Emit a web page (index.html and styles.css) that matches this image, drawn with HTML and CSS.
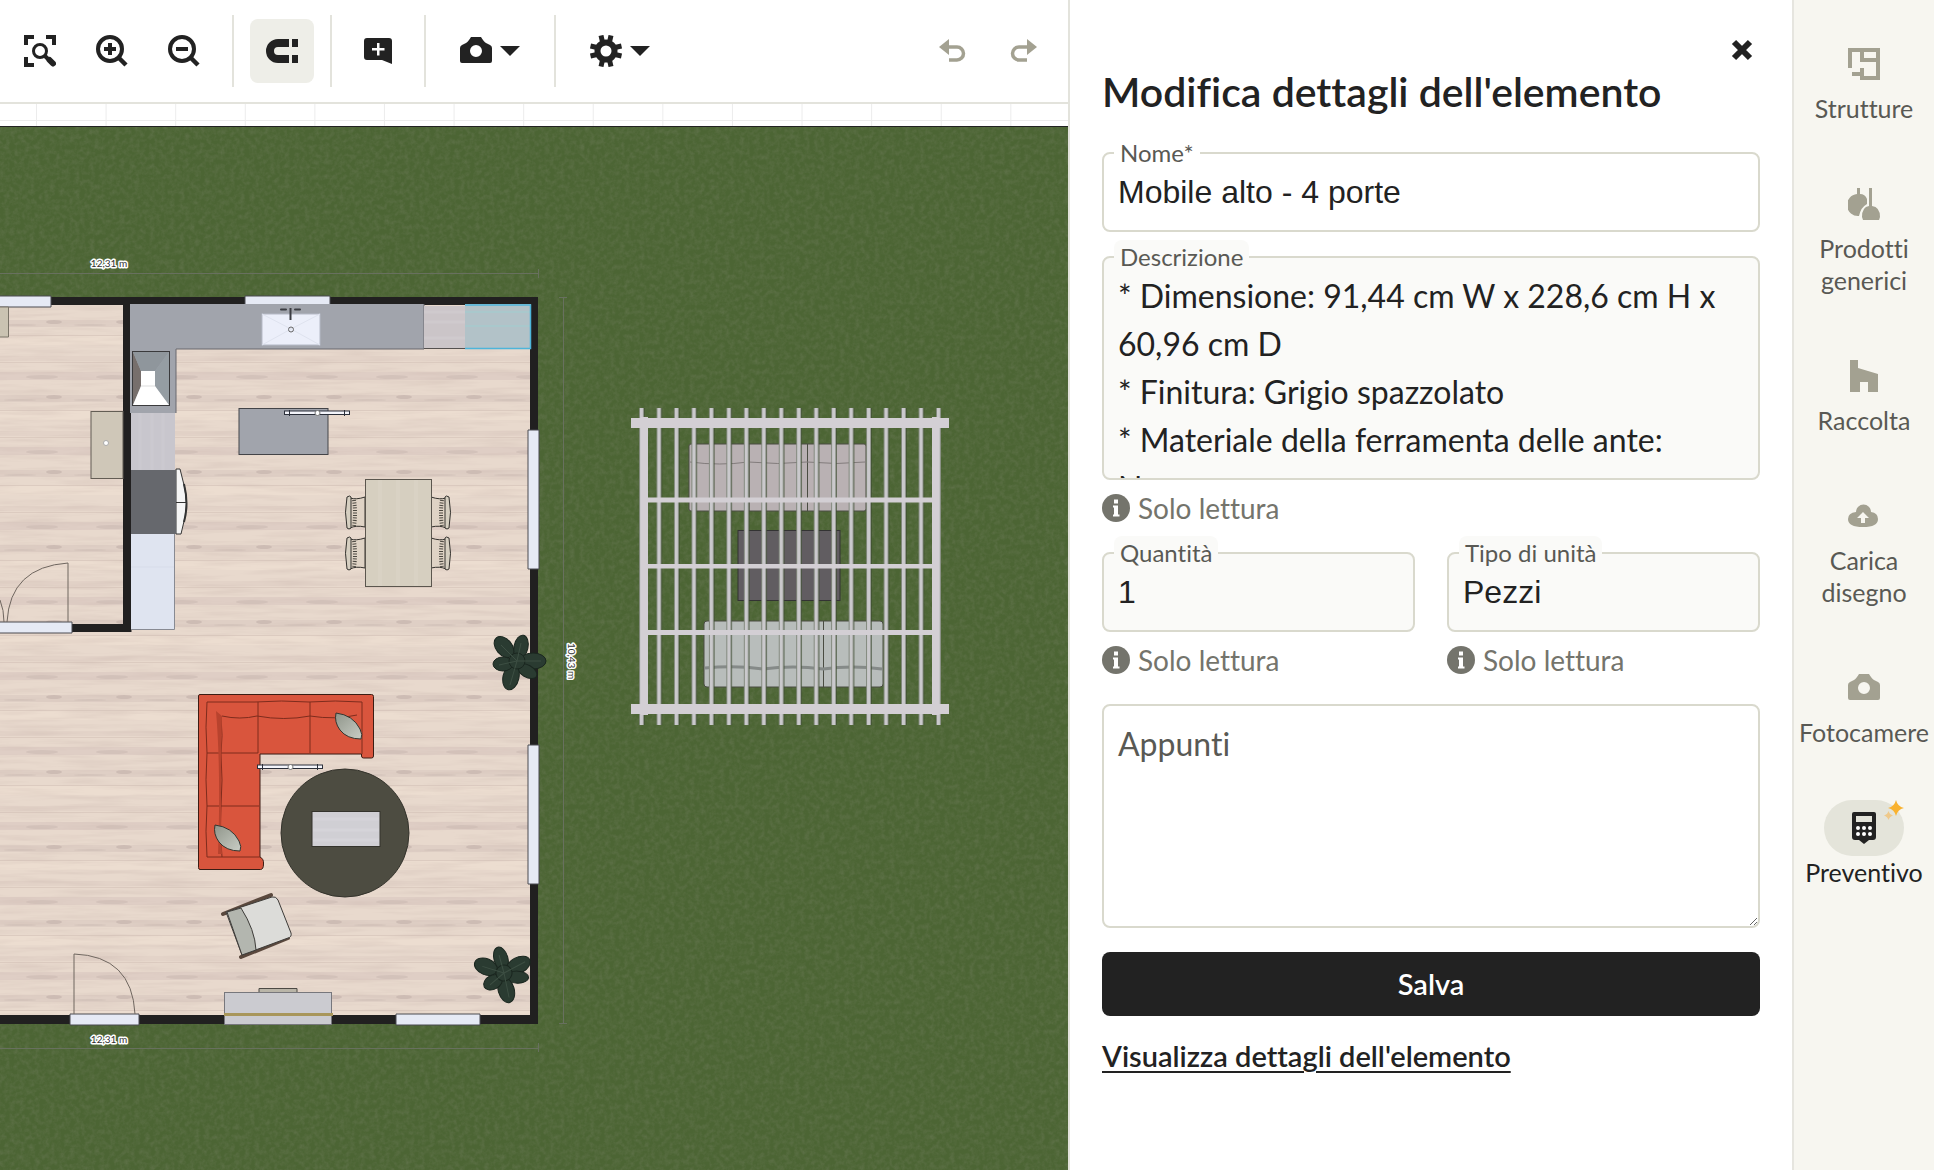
FILE: index.html
```html
<!DOCTYPE html>
<html lang="it">
<head>
  <meta charset="UTF-8" />
  <meta name="viewport" content="width=device-width, initial-scale=1.0" />
  <title>Modifica dettagli dell'elemento</title>
  <link rel="stylesheet" href="styles.css">
</head>
<body>
  <main class="workspace">
    <div class="toolbar">
      <button class="tool" aria-label="Adatta allo schermo">
        <svg class="icon" viewBox="0 0 32 32"><path d="M0 0h10v4H4v6H0zM22 0h10v10h-4V4h-6zM0 22h4v6h6v4H0z"/><circle cx="16" cy="16" r="6.5" fill="none" stroke="currentColor" stroke-width="3"/><path d="M21 21l3 3" stroke="currentColor" stroke-width="4"/><path d="M25.500 25l3.500 3.500" stroke="currentColor" stroke-width="6" stroke-linecap="round"/></svg>
      </button>
      <button class="tool" aria-label="Ingrandisci">
        <svg class="icon" viewBox="0 0 32 32"><circle cx="14" cy="14" r="12" fill="none" stroke="currentColor" stroke-width="4"/><path d="M22.500 22.500l7.500 7.500" stroke="currentColor" stroke-width="4.500"/><path d="M12 8h4v4h4v4h-4v4h-4v-4H8v-4h4z"/></svg>
      </button>
      <button class="tool" aria-label="Riduci">
        <svg class="icon" viewBox="0 0 32 32"><circle cx="14" cy="14" r="12" fill="none" stroke="currentColor" stroke-width="4"/><path d="M22.500 22.500l7.500 7.500" stroke="currentColor" stroke-width="4.500"/><path d="M8 12h12v4H8z"/></svg>
      </button>
      <span class="divider"></span>
      <button class="tool active" aria-label="Calamita" aria-pressed="true">
        <svg class="icon" viewBox="0 0 32 32"><path d="M23 4H12a12 12 0 0 0 0 24h11v-8H12a4 4 0 0 1 0-8h11zM26 4h6v8h-6zM26 20h6v8h-6z"/></svg>
      </button>
      <span class="divider"></span>
      <button class="tool note" aria-label="Aggiungi nota">
        <svg class="icon" viewBox="0 0 32 32"><path fill-rule="evenodd" d="M5 3h22a3 3 0 0 1 3 3v23l-10-4H5a3 3 0 0 1-3-3V6a3 3 0 0 1 3-3zM15 8v5h-5v2.500h5v5h2.500v-5h5V13h-5V8z"/></svg>
      </button>
      <span class="divider"></span>
      <button class="tool menu" aria-label="Fotocamera">
        <svg class="icon" viewBox="0 0 32 32"><path fill-rule="evenodd" d="M11 2h10q3 5 5 6l4 2q2 1 2 3v13q0 2-2 2H2q-2 0-2-2V13q0-2 2-3l4-2q2-1 5-6zM16 10a6 6 0 1 0 0 12 6 6 0 0 0 0-12z"/></svg>
        <svg class="caret" viewBox="0 0 20 10"><path d="M0 0h20L10 10z"/></svg>
      </button>
      <span class="divider"></span>
      <button class="tool menu" aria-label="Impostazioni">
        <svg class="icon" viewBox="0 0 32 32"><circle cx="16" cy="16" r="8.500" fill="none" stroke="currentColor" stroke-width="6"/><g stroke="currentColor" stroke-width="5"><path d="M19.500 7l1.500-6.500M12.500 7L11 0.500M19.500 25l1.500 6.500M12.500 25L11 31.500M7 12.500L0.500 11M7 19.500L0.500 21M25 12.500l6.500-1.500M25 19.500l6.500 1.500"/></g></svg>
        <svg class="caret" viewBox="0 0 20 10"><path d="M0 0h20L10 10z"/></svg>
      </button>
      <div class="history">
        <button class="tool" aria-label="Annulla" disabled>
          <svg class="icon" viewBox="0 0 32 32"><path d="M3 12L13 4v16z"/><path d="M12 12h9a6.500 6.500 0 0 1 0 13h-8" fill="none" stroke="currentColor" stroke-width="3.500"/></svg>
        </button>
        <button class="tool" aria-label="Ripeti" disabled>
          <svg class="icon" viewBox="0 0 32 32"><path d="M29 12L19 4v16z"/><path d="M20 12h-9a6.500 6.500 0 0 0 0 13h8" fill="none" stroke="currentColor" stroke-width="3.500"/></svg>
        </button>
      </div>
    </div>
    <div class="ruler"></div>
    <div class="canvas">
      <svg class="plan" viewBox="0 127 1068 1043" preserveAspectRatio="xMinYMin slice">
        <defs>
          <filter id="grass" x="0" y="0" width="100%" height="100%">
            <feTurbulence type="fractalNoise" baseFrequency="0.2" numOctaves="3" seed="4"/>
            <feColorMatrix values="0 0 0 0 0.13  0 0 0 0 0.18  0 0 0 0 0.08  1.2 0 0 0 -0.45"/>
          </filter>
          <filter id="grain" x="0" y="0" width="100%" height="100%">
            <feTurbulence type="fractalNoise" baseFrequency="0.015 0.2" numOctaves="3" seed="9"/>
            <feColorMatrix values="0 0 0 0 0.62  0 0 0 0 0.5  0 0 0 0 0.45  0.8 0 0 0 -0.32"/>
          </filter>
          <pattern id="planks" width="70" height="75" patternUnits="userSpaceOnUse" y="10">
            <rect width="70" height="75" fill="#e8d9cd"/>
            <rect y="10" width="70" height="7" fill="#dfcfc5"/>
            <rect y="26" width="70" height="9" fill="#ecddd0"/>
            <rect y="46" width="70" height="5" fill="#e3d3c8"/>
            <rect y="62" width="70" height="8" fill="#dfcec5"/>
            <ellipse cx="54" cy="12" rx="8" ry="2" fill="#cdbcb4"/>
            <ellipse cx="20" cy="15" rx="16" ry="1" fill="#d5c5bc"/>
            <ellipse cx="42" cy="67" rx="16" ry="2" fill="#d3c2ba"/>
            <path d="M0 25.500h70M0 52.500h70" stroke="#dccbc0"/>
          </pattern>
          <pattern id="slats" x="639" y="400" width="17.470" height="400" patternUnits="userSpaceOnUse">
            <rect width="5.500" height="400" fill="#3c4b30"/>
            <rect x="0.500" width="4" height="400" fill="#cac9cc"/>
          </pattern>
          <linearGradient id="cushion" x1="0" y1="0" x2="1" y2="1">
            <stop offset="0" stop-color="#8f958a"/>
            <stop offset="1" stop-color="#c9cdc5"/>
          </linearGradient>
          <g id="chair">
            <path d="M19 1Q10 4 4 2v30q6-3 15-1z" fill="#dfd3c5" stroke="#34322e"/>
            <path d="M1 1q3-2 4 0v31q-2 2-4 0-3-16 0-31z" fill="#d6cfc1" stroke="#34322e"/>
            <path d="M8 4q2 13 0 26" fill="none" stroke="#4a4740" stroke-width="4" stroke-dasharray="1 1.500"/>
          </g>
          <g id="plant" fill="#2a3b31" stroke="#1a261f">
            <ellipse cx="-13" cy="-14" rx="12" ry="8" transform="rotate(50 -13 -14)"/>
            <ellipse cx="4" cy="-14" rx="7" ry="12" transform="rotate(12 4 -14)"/>
            <ellipse cx="16" cy="0" rx="13" ry="8"/>
            <ellipse cx="10" cy="10" rx="11" ry="6" transform="rotate(30 10 10)"/>
            <ellipse cx="-6" cy="16" rx="8" ry="13" transform="rotate(12 -6 16)"/>
            <ellipse cx="-14" cy="3" rx="10" ry="7"/>
            <circle r="8"/>
            <path d="M0 0L-16-16M0 0l4-18M0 0h24M0 0l-7 24M0 0l-18 4" stroke="#3d4f43"/>
          </g>
          <g id="pillow">
            <path d="M0 0q17 2 24 16 3 6 1 10Q11 26 4 17-2 9 0 0z" fill="url(#cushion)" stroke="#34352f"/>
          </g>
          <g id="rod">
            <rect width="65" height="3.500" fill="#f4f5fb" stroke="#2b2f3a"/>
            <path d="M5-1v6M60-1v6" stroke="#2b2f3a"/>
            <circle cx="33" cy="2" r="2.500" fill="#fff" stroke="#777"/>
          </g>
        </defs>

        <!-- garden -->
        <rect y="127" width="2400" height="2400" fill="#4c6534"/>
        <rect y="127" width="2400" height="2400" filter="url(#grass)"/>

        <!-- measures -->
        <g fill="none" stroke="#68705f">
          <path d="M0 273.500h538M538.500 269v9M0 1048.500h538M538.500 1043v9M563.500 298v726M559 297.500h8M559 1023.500h8"/>
        </g>
        <g class="measure">
          <text x="109" y="267">12,31 m</text>
          <text x="109" y="1043">12,31 m</text>
          <text x="0" y="0" transform="translate(568 661) rotate(90)">10,43 m</text>
        </g>

        <!-- walls and floor -->
        <path d="M0 297h538v727H0z" fill="#212020"/>
        <path d="M0 305h530v710H0z" fill="url(#planks)"/>
        <rect y="305" width="530" height="710" filter="url(#grain)"/>
        <path d="M123 300h8.500v332H60v-8h63z" fill="#212020"/>
        <g fill="#e6eaf5" stroke="#4a4a50">
          <path d="M-2 296h53v11H-2zM245 296h85v11h-85zM528 430h11v139h-11zM528 745h11v139h-11zM396 1014h84v11h-84zM70 1014h69v11H70zM-2 622h74v11H-2z"/>
        </g>
        <g fill="none" stroke="#6f665f">
          <path d="M74 1014v-60q58 2 61 60M68 622v-59q-58 4-61 59M0 600q4 10 4 22"/>
        </g>

        <!-- kitchen -->
        <path d="M130 304h294v45H176v64h-46z" fill="#a1a4ac"/>
        <path d="M424 304v45H176v64" fill="none" stroke="#68696e"/>
        <rect x="424" y="306" width="41" height="42" fill="#cbc5c8"/>
        <path d="M424 312h41M424 322h41M424 338h41" stroke="#cfcacd" stroke-width="3"/>
        <path d="M424 348.500h41" stroke="#55514f"/>
        <rect x="465" y="304" width="66" height="45" fill="#b2c2c8"/>
        <path d="M465 312h65M465 326h65" stroke="#a9c8cc" stroke-width="2"/>
        <path d="M465 305h65.500v43.500H465" fill="none" stroke="#4db5da" stroke-width="1.500"/>
        <rect x="262" y="314" width="58" height="31" fill="#eceffa" stroke="#b5b9c6"/>
        <path d="M262 314l29 15 29-15M262 345l29-16 29 16" fill="none" stroke="#dfe3ef"/>
        <circle cx="291" cy="329.500" r="2.500" fill="none" stroke="#666"/>
        <path d="M290.500 308v12" stroke="#3b3c42" stroke-width="2"/>
        <path d="M281 309.500h5M295 309.500h5" stroke="#3b3c42" stroke-width="2" stroke-linecap="round"/>
        <rect x="132.500" y="351.500" width="37" height="54" fill="#a1a4ac" stroke="#3a3a3c"/>
        <path d="M133 352l8 19v15l-8 19z" fill="#776f6c"/>
        <path d="M133 352h36l-14 19h-14z" fill="#8f969c"/>
        <path d="M169 352v53l-14-19v-15z" fill="#959da3"/>
        <path d="M141 371h14v15l14 19h-36l8-19z" fill="#fff"/>
        <path d="M141 386h14" stroke="#ddd"/>
        <rect x="131" y="413" width="44" height="57" fill="#c8c6cd"/>
        <path d="M140 413v57M152 413v57M163 413v57" stroke="#cbc9d0" stroke-width="3"/>
        <path d="M176 469h4l5 20q3 15 0 28l-4 17h-5z" fill="#f5f5f5" stroke="#333"/>
        <path d="M184 484q5 20 0 38" fill="none" stroke="#333" stroke-width="2"/>
        <path d="M176 502.500h11" stroke="#333"/>
        <rect x="131" y="470" width="45" height="64" fill="#66686d"/>
        <rect x="131" y="534" width="43" height="95" fill="#dfe4f0"/>
        <path d="M131 629.500h43.500V534" fill="none" stroke="#888a92"/>
        <path d="M131 567h43" stroke="#d7dce9"/>
        <rect x="91" y="411.500" width="32" height="67" fill="#cfc7b8" stroke="#635d54"/>
        <circle cx="106" cy="443" r="2.500" fill="#fff" stroke="#aaa"/>
        <path d="M-1 307h9.500v30H-1z" fill="#cac3b2" stroke="#7a7468"/>
        <rect x="239" y="408.500" width="89" height="46" fill="#a1a4ac" stroke="#434448"/>
        <use href="#rod" x="284.500" y="411"/>

        <!-- dining table -->
        <use href="#chair" transform="translate(346 496)"/>
        <use href="#chair" transform="translate(346 537)"/>
        <use href="#chair" transform="translate(450 496) scale(-1 1)"/>
        <use href="#chair" transform="translate(450 537) scale(-1 1)"/>
        <rect x="365.500" y="479.500" width="66" height="107" fill="#d6cfc0" stroke="#5b564e"/>
        <path d="M380 480v106M398 480v106M416 480v106" stroke="#d9d2c4" stroke-width="4"/>

        <use href="#plant" transform="translate(517 661)"/>

        <!-- living room -->
        <path d="M200 694.500h171.500q2 0 2 2V756q0 2-2 2h-8q-2 0-2-2v-2H260v103q4 2 3.500 7 0 5.500-3 5.500H200q-1.500 0-1.500-2V696q0-1.500 1.500-1.500z" fill="#d9553d" stroke="#3c1d14"/>
        <g fill="none" stroke="#7e2c1d">
          <path d="M207 857q-2-26 0-51-2-26 0-53-2-26 0-51h48q26-2 54 0 26-2 53 0v52M258 702v51M310 702v51M222 716q18 4 35 0 27 5 53 0 25 4 47-1M207 753h51M207 806h52M221 716q2 20 0 38 2 26 0 52-2 25 1 51M207 857h53"/>
        </g>
        <path d="M216 711q5 60 2 143h4q-2-50 0-138z" fill="#b8432e"/>
        <use href="#pillow" x="336" y="713"/>
        <use href="#pillow" x="215" y="825"/>
        <circle cx="345" cy="833" r="64" fill="#4d4c41" stroke="#34332c"/>
        <rect x="312" y="811.500" width="68" height="35" fill="#d0cfd4" stroke="#34332c"/>
        <path d="M313 819h66M313 830h66M313 840h66" stroke="#d5d4d9" stroke-width="3"/>
        <use href="#rod" x="257.500" y="765"/>
        <path d="M223 914l48-19M241 957l47-19" stroke="#5a483d" stroke-width="4" stroke-linecap="round"/>
        <path d="M226 912l46-15q4-1 6 3l13 33q1 4-3 5l-46 17z" fill="#dcdcd9" stroke="#3d3b38"/>
        <path d="M227 912l14-4q14 22 15 42l-14 5z" fill="#b3b6af" stroke="#3d3b38"/>
        <path d="M259 992v-3.500h38v3.500" fill="#b9b5a8" stroke="#4c4a44"/>
        <rect x="224.500" y="992.500" width="107" height="32" fill="#cbcbd0" stroke="#77777c"/>
        <path d="M224 1014.500h109" stroke="#a8965a" stroke-width="3"/>
        <use href="#plant" transform="translate(504 973) rotate(-28)"/>

        <!-- pergola -->
        <g fill="#b9b1b3" stroke="#4a4c42">
          <rect x="689" y="444" width="177" height="67" rx="2"/>
          <path d="M749 444v67M807.500 444v67"/>
          <path d="M690 462q30 4 58 0 30 3 59 0 30 3 58 0" fill="none" stroke="#827c7c"/>
        </g>
        <rect x="738" y="530.500" width="102" height="70" fill="#615d61" stroke="#333"/>
        <g fill="#b8bdbb" stroke="#4a4c42">
          <rect x="704" y="621" width="179" height="66" rx="3"/>
          <path d="M823.500 621v66"/>
          <path d="M705 668q30-3 58 1 30-4 60 0 30-4 59 0" fill="none" stroke="#858a88" stroke-width="3"/>
        </g>
        <rect x="639" y="408" width="302" height="317" fill="url(#slats)"/>
        <g fill="#d3cfd4">
          <rect x="641" y="417" width="7" height="298"/>
          <rect x="932" y="417" width="7" height="298"/>
          <path d="M643 497.500h290v5H643zM643 564h290v4.500H643zM643 630h290v5H643z"/>
          <path d="M631 418h318v10H631zM631 704h318v10H631z"/>
        </g>
      </svg>
    </div>
  </main>

  <aside class="panel">
    <div class="panel-top">
      <button class="close" aria-label="Chiudi">
        <svg viewBox="0 0 22 22"><path d="M3 3l16 16M19 3L3 19" stroke="currentColor" stroke-width="6"/></svg>
      </button>
    </div>
    <h1>Modifica dettagli dell'elemento</h1>
    <form class="form">
      <div class="field">
        <input type="text" id="nome" value="Mobile alto - 4 porte">
        <label for="nome">Nome*</label>
      </div>
      <div class="field readonly">
        <textarea id="descrizione" readonly>* Dimensione: 91,44 cm W x 228,6 cm H x 60,96 cm D
* Finitura: Grigio spazzolato
* Materiale della ferramenta delle ante: Nero</textarea>
        <label for="descrizione">Descrizione</label>
        <p class="hint">
          <svg viewBox="0 0 28 28"><circle cx="14" cy="14" r="14"/><path d="M12 5.500h4v4h-4zM11 11.500h5v9h1.500v2h-6.500v-2H12v-7h-1z" fill="#fff"/></svg>
          Solo lettura
        </p>
      </div>
      <div class="row">
        <div class="field readonly">
          <input type="text" id="quantita" value="1" readonly>
          <label for="quantita">Quantità</label>
          <p class="hint">
            <svg viewBox="0 0 28 28"><circle cx="14" cy="14" r="14"/><path d="M12 5.500h4v4h-4zM11 11.500h5v9h1.500v2h-6.500v-2H12v-7h-1z" fill="#fff"/></svg>
            Solo lettura
          </p>
        </div>
        <div class="field readonly">
          <input type="text" id="unita" value="Pezzi" readonly>
          <label for="unita">Tipo di unità</label>
          <p class="hint">
            <svg viewBox="0 0 28 28"><circle cx="14" cy="14" r="14"/><path d="M12 5.500h4v4h-4zM11 11.500h5v9h1.500v2h-6.500v-2H12v-7h-1z" fill="#fff"/></svg>
            Solo lettura
          </p>
        </div>
      </div>
      <div class="field">
        <textarea class="notes" placeholder="Appunti" aria-label="Appunti"></textarea>
      </div>
      <button type="button" class="save">Salva</button>
    </form>
    <a href="#" class="details">Visualizza dettagli dell'elemento</a>
  </aside>

  <nav class="rail">
    <button class="rail-item">
      <span class="pill"><svg class="icon" viewBox="0 0 32 32"><path fill-rule="evenodd" d="M0 0h32v32H12v-4H4v-4h8v-4h4v8h12V14H12V4H4v16H0zM16 4v6h12V4z"/></svg></span>
      Strutture
    </button>
    <button class="rail-item">
      <span class="pill"><svg class="icon" viewBox="0 0 32 32"><path d="M9 0h3v6q5 0 7 5v5q-6 3-8 12A11 11 0 0 1 9 6zM21 0h3v18q8 1 8 11l-1 3H15l-1-3q0-10 7-11z"/></svg></span>
      Prodotti generici
    </button>
    <button class="rail-item">
      <span class="pill"><svg class="icon" viewBox="0 0 32 32"><path d="M2 0h8v8l20 6v18H20V22h-8v10H2z"/></svg></span>
      Raccolta
    </button>
    <button class="rail-item">
      <span class="pill"><svg class="icon" viewBox="0 0 32 32"><path fill-rule="evenodd" d="M8 12a7.500 7.500 0 0 1 15 0q7 1 7 7 0 8-15 8T0 19q0-6 8-7zM15 12l-6 6h4v5h4v-5h4z"/></svg></span>
      Carica disegno
    </button>
    <button class="rail-item">
      <span class="pill"><svg class="icon" viewBox="0 0 32 32"><path fill-rule="evenodd" d="M11 2h10q3 5 5 6l4 2q2 1 2 3v13q0 2-2 2H2q-2 0-2-2V13q0-2 2-3l4-2q2-1 5-6zM16 10a6 6 0 1 0 0 12 6 6 0 0 0 0-12z"/></svg></span>
      Fotocamere
    </button>
    <button class="rail-item selected">
      <span class="pill">
        <svg class="icon" viewBox="0 0 32 32"><path d="M6 0h20q2 0 2 2v23q0 3-3 3h-4l-5 4-5-4H7q-3 0-3-3V2q0-2 2-2z"/><path d="M8 4h16v6H8z" fill="#e4e4da"/><g fill="#fff"><circle cx="10" cy="16" r="2"/><circle cx="16" cy="16" r="2"/><circle cx="22" cy="16" r="2"/><circle cx="10" cy="22" r="2"/><circle cx="16" cy="22" r="2"/><circle cx="22" cy="22" r="2"/></g></svg>
        <svg class="sparkle" viewBox="0 0 20 20"><path d="M12 0q1.500 6.500 8 8-6.500 1.500-8 8-1.500-6.500-8-8 6.500-1.500 8-8z" fill="#f9b22f"/><path d="M4.500 11q1 3.500 4.500 4.500-3.500 1-4.500 4.500-1-3.500-4.500-4.500 3.500-1 4.500-4.500z" fill="#efc98a"/></svg>
      </span>
      Preventivo
    </button>
  </nav>
</body>
</html>
```
FILE: styles.css
```css
* { box-sizing: border-box; }

body {
  margin: 0;
  height: 100vh;
  display: flex;
  overflow: hidden;
  background: #fff;
  color: #222;
  font-family: Lato, "Liberation Sans", sans-serif;
  font-variant-ligatures: none;
}

button {
  border: none;
  background: none;
  padding: 0;
  color: inherit;
  font-family: inherit;
  font-variant-ligatures: inherit;
  cursor: pointer;
}

svg {
  display: block;
  fill: currentColor;
}

.icon {
  width: 32px;
  height: 32px;
}

/* workspace */
.workspace {
  flex: 1;
  min-width: 0;
  display: flex;
  flex-direction: column;
}

.toolbar {
  display: flex;
  align-items: center;
  height: 104px;
  padding: 0 12px 0 8px;
  border-bottom: 2px solid #e3e3dc;
}

.tool {
  display: flex;
  align-items: center;
  justify-content: center;
  flex: none;
  width: 64px;
  height: 64px;
  border-radius: 8px;
}

.tool + .tool {
  margin-left: 8px;
}

.tool.active {
  background: #eeeee8;
}

.tool.note {
  width: 60px;
}

.tool.menu {
  width: 96px;
  gap: 8px;
}

.caret {
  width: 20px;
  height: 10px;
}

.divider {
  flex: none;
  width: 2px;
  height: 72px;
  margin: 0 16px;
  background: #e3e3dc;
}

.history {
  display: flex;
  margin-left: auto;
  color: #a3a191;
}

.ruler {
  flex: none;
  height: 23px;
  border-bottom: 1px solid #222;
  background:
    linear-gradient(#ececec, #ececec) 0 16px / 100% 1px no-repeat,
    linear-gradient(90deg, #ececec 1px, transparent 1px) 36px 0 / 6.517% 100%,
    #fff;
}

.canvas {
  flex: 1;
  min-height: 0;
  overflow: hidden;
  background: #4b6531;
}

.plan {
  width: 100%;
  height: 100%;
}

.measure {
  font-size: 10px;
  text-anchor: middle;
  fill: #333;
  stroke: #fff;
  stroke-width: 3px;
  stroke-linejoin: round;
  paint-order: stroke;
}

/* details panel */
.panel {
  flex: 0 1 724px;
  padding: 34px 32px 32px;
  border-left: 2px solid #e3e3dc;
  background: #fff;
}

.panel-top {
  display: flex;
  justify-content: flex-end;
}

.close {
  display: flex;
  align-items: center;
  justify-content: center;
  width: 36px;
  height: 32px;
}

.close svg {
  width: 22px;
  height: 22px;
}

h1 {
  margin: 0 0 34px;
  font-size: 41px;
  line-height: 52px;
  font-weight: 600;
}

.form {
  display: flex;
  flex-direction: column;
  gap: 24px;
}

.row {
  display: grid;
  grid-template-columns: 1fr 1fr;
  gap: 32px;
}

.field {
  position: relative;
}

.field input,
.field textarea {
  display: block;
  width: 100%;
  border: 2px solid #d9d9cd;
  border-radius: 8px;
  background: #fff;
  color: #222;
  font-size: 32px;
  font-variant-ligatures: inherit;
  outline: none;
}

.field input {
  height: 80px;
  padding: 0 14px;
  font-family: "Liberation Sans", Arial, sans-serif;
}

.field textarea {
  height: 224px;
  padding: 14px 24px 0 14px;
  font-family: inherit;
  line-height: 48px;
  resize: none;
  overflow: hidden;
}

.field .notes {
  resize: vertical;
}

.notes::placeholder {
  color: #595954;
}

.field label {
  position: absolute;
  top: -16px;
  left: 12px;
  padding: 1px 6px 0;
  border-radius: 8px;
  background: #fff;
  color: #595954;
  font-size: 24px;
  line-height: 32px;
}

.readonly input,
.readonly textarea,
.field.readonly label {
  background: #fafaf8;
}

.field.readonly input,
.field.readonly textarea {
  background: #fafaf8;
}

.hint {
  display: flex;
  align-items: center;
  gap: 8px;
  margin: 8px 0 0;
  color: #74746c;
  font-size: 28px;
  line-height: 40px;
}

.hint svg {
  width: 28px;
  height: 28px;
}

.save {
  height: 64px;
  padding-bottom: 2px;
  border-radius: 8px;
  background: #222;
  color: #fff;
  font-size: 29px;
  font-weight: 600;
}

.details {
  display: inline-block;
  margin-top: 16px;
  color: #222;
  font-size: 29px;
  line-height: 48px;
  font-weight: 600;
  text-decoration-thickness: 2px;
  text-underline-offset: 4px;
}

/* right rail */
.rail {
  flex: none;
  display: flex;
  flex-direction: column;
  align-items: center;
  gap: 52px;
  width: 142px;
  padding-top: 36px;
  border-left: 2px solid #e6e5df;
  background: #f7f6f0;
}

.rail-item {
  display: flex;
  flex-direction: column;
  align-items: center;
  max-width: 136px;
  color: #595954;
  font-size: 25px;
  line-height: 32px;
}

.pill {
  position: relative;
  display: flex;
  align-items: center;
  justify-content: center;
  width: 80px;
  height: 56px;
  border-radius: 28px;
  color: #a3a191;
}

.rail-item.selected {
  color: #222;
}

.selected .pill {
  background: #e4e4da;
  color: #222;
}

.sparkle {
  position: absolute;
  top: 0;
  right: 0;
  width: 20px;
  height: 20px;
}
```
